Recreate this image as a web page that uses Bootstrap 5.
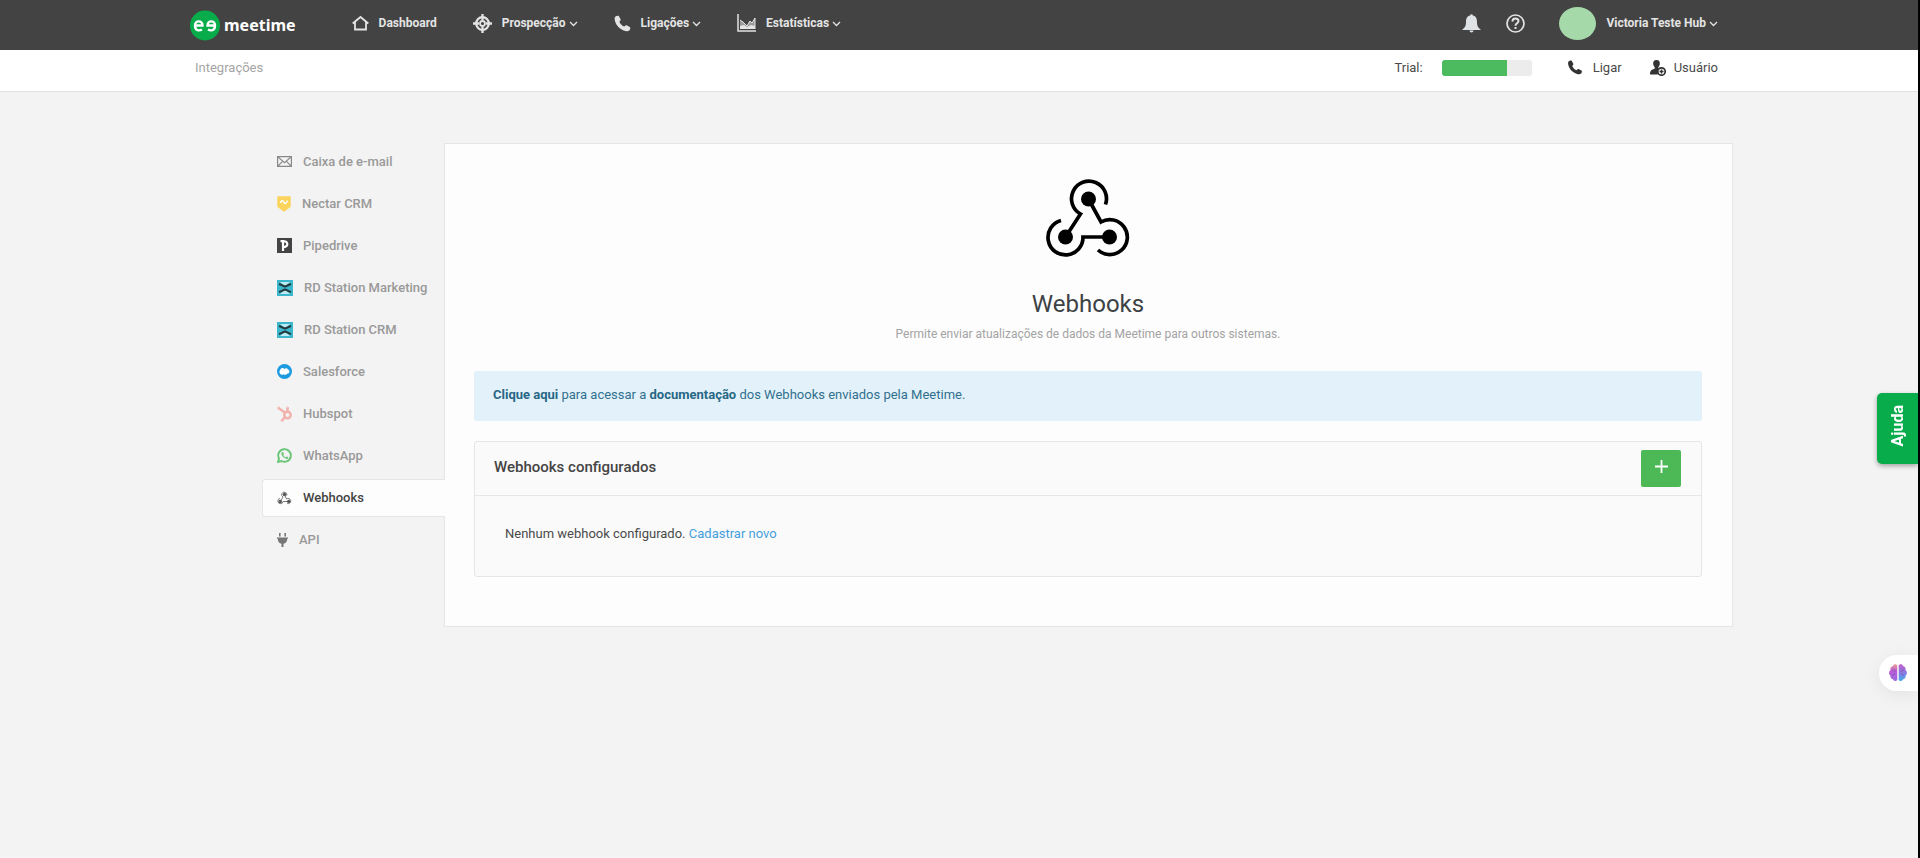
<!DOCTYPE html>
<html lang="pt-BR">
<head>
<meta charset="utf-8">
<meta name="viewport" content="width=device-width, initial-scale=1">
<title>Meetime - Integrações</title>
<link href="https://cdn.jsdelivr.net/npm/bootstrap@5.3.0/dist/css/bootstrap.min.css" rel="stylesheet">
<style>
  body { font-family: Roboto, "Noto Sans", sans-serif; font-size: 13px; line-height: 20px; color: #4a4a4a; background: #f3f3f3; border-right: 2px solid #000; }
  .wrap { padding-left: 190px; padding-right: 200px; }
  .topbar { background: #434343; min-height: 50px; font-size: 12px; }
  .topbar a, .topbar button { color: #e4e4e4; text-decoration: none; }
  .plain { background: none; border: 0; padding: 0; font: inherit; color: inherit; }
  .topbar .plain { font-weight: 700; }
  .topbar .menu { column-gap: 36px; margin-left: 56px; padding-bottom: 4px; }
  .topbar .tools { column-gap: 25px; }
  .ico-gap { gap: 10px; }
  .wordmark { font-family: "Noto Sans", sans-serif; font-size: 16px; font-weight: 700; color: #fff; }
  .avatar { width: 37px; height: 33px; border-radius: 50%; background: #a5d9aa; }
  .user { margin-left: 9px; }
  .subbar { background: #fff; min-height: 42px; border-bottom: 1px solid #e2e2e2; padding-bottom: 6px; }
  .crumb { color: #a5a5a5; padding-left: 5px; }
  .trial-label { margin-right: 19px; }
  .trial { width: 90px; height: 16px; border-radius: 3px; background: #ececec; }
  .trial .progress-bar { background: #4cba5e; }
  .call { margin-left: 35px; }
  .page { padding: 51px 185px 40px 262px; }
  .side { width: 182px; gap: 4px; }
  .side .nav-link { height: 38px; padding: 0 0 1px 14px; gap: 11px; color: #999; font-weight: 500; border: 1px solid transparent; border-right: 0; white-space: nowrap; }
  .side .nav-link.active { background: #fdfdfd; color: #444; border-color: #e6e6e6; border-radius: 3px 0 0 3px; margin-right: -1px; position: relative; }
  .panel { background: #fdfdfd; border: 1px solid #e6e6e6; padding: 34px 30px 49px 29px; min-width: 0; }
  .panel h1 { font-size: 24px; line-height: 32px; font-weight: 400; color: #3c4245; margin: 30px 0 4px; }
  .lede { color: #a3a3a3; font-size: 12px; margin-bottom: 27px; }
  .info { background: #e3f2fa; color: #31708f; padding: 14px 19px 16px; border-radius: 3px; margin-bottom: 20px; }
  .info a { color: #286786; font-weight: 700; text-decoration: none; }
  .hooks { background: #fafafa; border: 1px solid #e6e6e6; border-radius: 3px; }
  .hooks .card-header { background: none; border-bottom: 1px solid #e6e6e6; padding: 8px 20px 8px 19px; }
  .hooks h2 { font-size: 15px; line-height: 20px; font-weight: 500; margin: 0 0 4px; color: #444; }
  .hooks .card-body { padding: 28px 30px 32px; }
  .hooks .card-body a { color: #459fdc; text-decoration: none; }
  .add { width: 40px; height: 37px; background: #4cb856; border-radius: 2px; padding: 0 0 4px; }
  .add:hover { background: #3fa649; }
  .help { position: fixed; right: 2px; top: 393px; width: 41px; height: 71px; background: #08ac4b; color: #fff; border: 0; border-radius: 5px 0 0 5px; box-shadow: 0 2px 5px #0005; font-size: 16px; font-weight: 700; padding: 0; }
  .help span { writing-mode: vertical-rl; transform: rotate(180deg); }
  .brain { position: fixed; right: 2px; top: 655px; width: 39px; height: 36px; background: #fff; border: 0; border-radius: 18px 0 0 18px; box-shadow: 0 4px 18px #0001; padding: 0 0 0 9px; text-align: left; line-height: 1; }
  @media (max-width: 1300px) {
    .wrap, .page { padding-left: 24px; padding-right: 60px; }
    .topbar .menu { margin-left: 24px; column-gap: 20px; }
  }
</style>
</head>
<body class="min-vh-100">
<svg class="d-none" xmlns="http://www.w3.org/2000/svg">
  <symbol id="chev" viewBox="0 0 9 6"><path d="M1 1l3.500 3.500L8 1" fill="none" stroke="currentColor" stroke-width="1.300"/></symbol>
  <symbol id="phone" viewBox="0 0 18 18"><path fill="currentColor" d="M1.500 1.500C2.500.7 4.500.3 5.200 1.200L7 4.500c.5 1-.9 2-1.300 2.700.8 2.200 2.600 4 5 5 .8-.5 1.600-1.800 2.700-1.300l3.300 1.800c1 .7.500 2.700-.3 3.500-1 1-2.500 1.200-4.200.8C6.500 15.500 2.200 11.200 1 6 .6 4.200.5 2.500 1.500 1.500z"/></symbol>
  <symbol id="hook" viewBox="46 18 84 80"><g fill="none" stroke="currentColor" stroke-width="3.700"><path d="M105.500 44.500A17.500 17.500 0 1 0 80.500 54L65.500 77M61 60.500A17.500 17.500 0 1 0 83 77H109M88.500 39L101 62A17.500 17.500 0 1 1 98 90"/></g><g fill="currentColor"><circle cx="88.500" cy="39" r="7.500"/><circle cx="65.500" cy="77" r="7.500"/><circle cx="109.500" cy="77" r="7.500"/></g></symbol>
  <symbol id="rd" viewBox="0 0 16 16"><path fill="#3bb6ca" d="M0 0h16v16H0z"/><path fill="#bdeaf2" d="M3 2h10L9.500 5h-3zM3 14h10l-3.500-3h-3z"/><path d="M2 4c3.500 1 4.500 2.500 6 2.500S10.500 5 14 4M2 12c3.500-1 4.500-2.500 6-2.500s2.500 1.500 6 2.500" fill="none" stroke="#26383c" stroke-width="2"/></symbol>
</svg>

<header class="topbar wrap d-flex align-items-center">
  <a href="#" class="d-flex align-items-center gap-1" aria-label="Meetime">
    <svg width="30" height="31" viewBox="0 0 30 31"><circle cx="15" cy="15.500" r="15" fill="#08ac4b"/><g fill="none" stroke="#fff" stroke-width="2.400"><path d="M6 15.500h6.500c0-5.500-7.500-5.500-7.500 0 0 5.500 4.500 5.500 7 4"/><path d="M24 15.500h-6.500c0-5.500 7.500-5.500 7.500 0 0 5.500-4.500 5.500-7 4"/></g></svg>
    <span class="wordmark">meetime</span>
  </a>
  <nav class="menu d-flex flex-wrap">
    <a class="plain d-flex align-items-center ico-gap" href="#"><svg width="17" height="16" viewBox="0 0 17 16" fill="none" stroke="currentColor" stroke-width="1.800"><path d="M.7 8.500L8.500 2l7.800 6.500M3 7v7.500h11V7"/></svg>Dashboard</a>
    <button class="plain d-flex align-items-center ico-gap" type="button"><svg width="19" height="19" viewBox="0 0 19 19" fill="none" stroke="currentColor"><circle cx="9.500" cy="9.500" r="6.300" stroke-width="2.300"/><circle cx="9.500" cy="9.500" r="2.500" stroke-width="1.800"/><path stroke-width="2.300" d="M9.500 0v6M9.500 13v6M0 9.500h6M13 9.500h6"/></svg><span>Prospecção <svg width="9" height="6"><use href="#chev"/></svg></span></button>
    <button class="plain d-flex align-items-center ico-gap" type="button"><svg width="17" height="17"><use href="#phone"/></svg><span>Ligações <svg width="9" height="6"><use href="#chev"/></svg></span></button>
    <button class="plain d-flex align-items-center ico-gap" type="button"><svg width="19" height="18" viewBox="0 0 19 18"><path d="M1 0v17h18" fill="none" stroke="currentColor" stroke-width="1.500"/><path d="M3 15V6l3 2 4 4 3-5 2 2 3-5v11z" fill="#9a9a9a"/><path d="M3 6l3 2 4 4 3-5 2 2 3-5v11" fill="none" stroke="currentColor"/><path d="M3 15v-3l4-1 3 2 4-2 4 1v3z" fill="currentColor"/></svg><span>Estatísticas <svg width="9" height="6"><use href="#chev"/></svg></span></button>
  </nav>
  <div class="tools d-flex align-items-center ms-auto pb-1">
    <button class="plain" type="button" aria-label="Notificações"><svg width="19" height="19" viewBox="0 0 19 19"><path fill="#dfe3e6" d="M8.200 1.500a1.300 1.300 0 0 1 2.600 0C14 2.200 15 4.500 15 8c0 4 1 5.500 3.500 7.300V16H.5v-.7C3 13.500 4 12 4 8c0-3.500 1-5.800 4.200-6.500zM7.500 16.500h4c0 2.500-4 2.500-4 0z"/></svg></button>
    <button class="plain" type="button" aria-label="Dúvidas"><svg width="19" height="19" viewBox="0 0 19 19" fill="none" stroke="currentColor" stroke-width="1.700"><circle cx="9.500" cy="9.500" r="8.500"/><path stroke-width="2" d="M6.500 7.500c0-4 6-3.800 6-.4 0 2.200-3 2.200-3 4.600M9.500 13v2"/></svg></button>
    <button class="plain user d-flex align-items-center ico-gap" type="button"><span class="avatar"></span><span>Victoria Teste Hub <svg width="9" height="6"><use href="#chev"/></svg></span></button>
  </div>
</header>

<div class="subbar wrap d-flex align-items-center">
  <span class="crumb">Integrações</span>
  <div class="ms-auto d-flex align-items-center">
    <span id="trial-label" class="trial-label">Trial:</span>
    <div class="progress trial" role="progressbar" aria-labelledby="trial-label" aria-valuenow="73" aria-valuemin="0" aria-valuemax="100"><div class="progress-bar" style="width:73%"></div></div>
    <button class="plain call d-flex align-items-center ico-gap" type="button"><svg width="16" height="15" color="#333"><use href="#phone"/></svg>Ligar</button>
    <button class="plain d-flex align-items-center gap-2 ms-4 ps-1" type="button"><svg width="16" height="16" viewBox="0 0 16 16"><path fill="#333" d="M6.500 0C9 0 10 1.500 9.800 4c-.2 1.600-.8 2.500-1.400 3v1.500L10 9l-2.500 5.500H0C0 10 2 9.800 4.700 8.800V7C4 6.500 3.400 5.500 3.200 4 3 1.500 4 0 6.500 0z"/><circle cx="11.500" cy="11.500" r="3.700" fill="#fff" stroke="#333" stroke-width="1.700"/><path stroke="#333" stroke-width="1.500" d="M11.500 9.500v4M9.500 11.500h4"/></svg>Usuário</button>
  </div>
</div>

<main class="page d-flex align-items-stretch">
  <nav class="side nav flex-column flex-shrink-0 flex-nowrap">
    <a class="nav-link d-flex align-items-center" href="#"><svg width="15" height="11" viewBox="0 0 15 11" fill="none" stroke="#888" stroke-width="1.200"><path d="M.6.600h13.800v9.800H.6zM.6.600l6.900 6 6.900-6M.6 10.400l5-5M14.400 10.400l-5-5"/></svg>Caixa de e-mail</a>
    <a class="nav-link d-flex align-items-center" href="#"><svg width="14" height="16" viewBox="0 0 14 16"><path fill="#fad45c" d="M1 1h12v9.500L7 15l-6-4.500z" stroke="#fad45c" stroke-width="1.500" stroke-linejoin="round"/><path d="M3.500 7c1-4 3-2 3.500-.5s2.500 1.500 3.500-2" fill="none" stroke="#fff" stroke-width="1.400"/></svg>Nectar CRM</a>
    <a class="nav-link d-flex align-items-center" href="#"><svg width="15" height="15" viewBox="0 0 15 15"><path fill="#444" d="M0 0h15v15H0z"/><path d="M3.500 3.200H6V13M6 3.800c5-2 6.500 5.500 0 5.400" fill="none" stroke="#fff" stroke-width="2.200"/></svg>Pipedrive</a>
    <a class="nav-link d-flex align-items-center" href="#"><svg width="16" height="16"><use href="#rd"/></svg>RD Station Marketing</a>
    <a class="nav-link d-flex align-items-center" href="#"><svg width="16" height="16"><use href="#rd"/></svg>RD Station CRM</a>
    <a class="nav-link d-flex align-items-center" href="#"><svg width="15" height="15" viewBox="0 0 15 15"><circle cx="7.500" cy="7.500" r="7.500" fill="#1d9be0"/><path fill="#fff" d="M4.500 10.500C2 10 2 6.500 3.500 5.500 4 3.500 6.500 3.500 7.500 5c1.500-1.300 3-.5 3.300.5C13 6 13 9.500 10.500 9.600 9.500 11 7.500 11.200 6.700 10.300c-.7.700-1.500.7-2.200.2z"/></svg>Salesforce</a>
    <a class="nav-link d-flex align-items-center" href="#"><svg width="15" height="16" viewBox="0 0 15 16" fill="none" stroke="#f0b3ad"><circle cx="10.500" cy="9" r="3.200" stroke-width="2.500"/><path stroke-width="2.500" d="M1.500 2l7 5M10.500 6V2M8 11l-3 3.500"/><circle cx="1.700" cy="2" r="1"/><circle cx="10.500" cy="1.800" r="1"/><circle cx="5" cy="14.500" r="1"/></svg>Hubspot</a>
    <a class="nav-link d-flex align-items-center" href="#"><svg width="15" height="15" viewBox="0 0 15 15"><path d="M1 14l1-3.500A6.300 6.300 0 1 1 4.500 13z" fill="none" stroke="#6cc679" stroke-width="1.900"/><path fill="#6cc679" d="M5.300 4c-2 1.500-.2 4 1.200 5.300 1.500 1.300 4 2.500 4.900.7.200-1-.8-1.200-1.600-1.600l-1 .9C7.800 9 6.700 8 6.300 7l.7-.9C6.600 5.300 6.300 3.700 5.300 4z"/></svg>WhatsApp</a>
    <a class="nav-link active d-flex align-items-center" aria-current="page" href="#"><svg width="15" height="14" viewBox="0 0 15 14"><g fill="none" stroke="#777" stroke-width="1"><path d="M9.800 4.500A2.600 2.600 0 1 0 6 6L3.500 10M3 7.500A2.600 2.600 0 1 0 6 10.500h5.500M7.500 3.500l2 4.500a2.600 2.600 0 1 1 .8 4.500"/></g><g fill="#555"><circle cx="7.500" cy="3.500" r="1.700"/><circle cx="3.300" cy="10.500" r="1.700"/><circle cx="11.700" cy="10.500" r="1.700"/></g></svg>Webhooks</a>
    <a class="nav-link d-flex align-items-center" href="#"><svg width="11" height="14" viewBox="0 0 11 14"><path fill="#777" d="M2 0h1.600v3.500H2zM7.400 0H9v3.500H7.400zM0 4.500h11v1.300h-.8c0 3-1.500 4.400-3.700 5V14h-2v-3.200C2.300 10.200.8 8.800.8 5.800H0z"/></svg>API</a>
  </nav>

  <section class="panel flex-grow-1">
    <div class="text-center">
      <svg class="d-block mx-auto" width="84" height="80" color="#000"><use href="#hook"/></svg>
      <h1>Webhooks</h1>
      <p class="lede">Permite enviar atualizações de dados da Meetime para outros sistemas.</p>
    </div>
    <div class="info" role="note"><a href="#">Clique aqui</a> para acessar a <a href="#">documentação</a> dos Webhooks enviados pela Meetime.</div>
    <div class="card hooks">
      <div class="card-header d-flex align-items-center justify-content-between">
        <h2>Webhooks configurados</h2>
        <button class="btn add d-flex align-items-center justify-content-center" type="button" aria-label="Adicionar webhook"><svg width="13" height="13" viewBox="0 0 13 13"><path d="M6.500 0v13M0 6.500h13" stroke="#fff" stroke-width="1.800"/></svg></button>
      </div>
      <div class="card-body">Nenhum webhook configurado. <a href="#">Cadastrar novo</a></div>
    </div>
  </section>
</main>

<button class="help" type="button"><span>Ajuda</span></button>
<button class="brain" type="button" aria-label="Assistente">
  <svg width="20" height="20" viewBox="0 0 20 20"><defs><linearGradient id="bl" x2="0" y2="1"><stop stop-color="#e9a08e"/><stop offset=".4" stop-color="#bd5bd6"/><stop offset="1" stop-color="#9a6be0"/></linearGradient><linearGradient id="br" x2="0" y2="1"><stop stop-color="#c45bcf"/><stop offset=".5" stop-color="#8a7be0"/><stop offset="1" stop-color="#3fb0ee"/></linearGradient></defs><path fill="url(#bl)" d="M9.300 2.500C8 .5 5.500 1 5 3 2.500 3.500 2 5.500 2.500 7 .5 8.500.7 11.500 2.300 12.500c0 2.500 1.200 3.500 2.700 3.800.8 2.200 3.300 2.200 4.300.7z"/><path fill="url(#br)" d="M10.700 2.500C12 .5 14.500 1 15 3c2.500.5 3 2.500 2.500 4 2 1.500 1.800 4.500.2 5.500 0 2.500-1.200 3.500-2.700 3.800-.8 2.200-3.300 2.200-4.300.7z"/><path d="M4 7c2-.5 3 .5 3 2M4 12c1 0 2.500 0 3-1.500M16 7c-2-.5-3 .5-3 2M16 12c-1 0-2.500 0-3-1.500" fill="none" stroke="#7d55b5" stroke-width=".8"/></svg>
</button>
<script src="https://cdn.jsdelivr.net/npm/bootstrap@5.3.0/dist/js/bootstrap.bundle.min.js"></script>
</body>
</html>
